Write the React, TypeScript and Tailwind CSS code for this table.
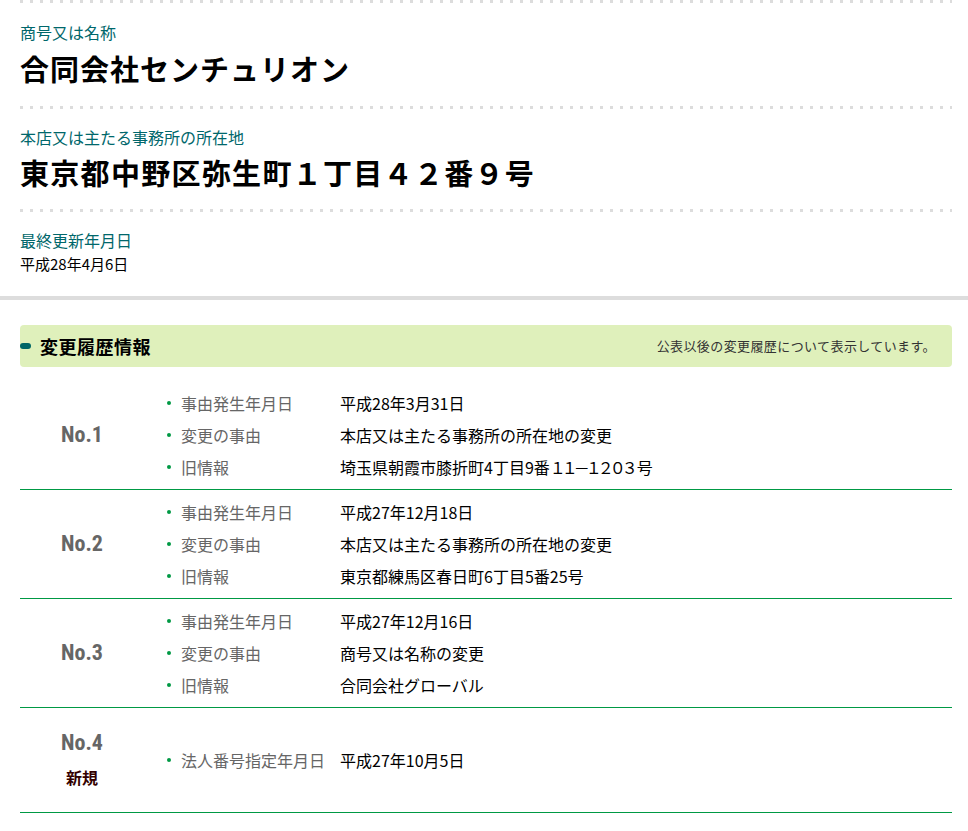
import React from "react";

type Item = { label: string; value: React.ReactNode };
type History = { no: string; isNew?: boolean; items: Item[] };

const histories: History[] = [
  {
    no: "No.1",
    items: [
      { label: "事由発生年月日", value: "平成28年3月31日" },
      { label: "変更の事由", value: "本店又は主たる事務所の所在地の変更" },
      {
        label: "旧情報",
        value: (
          <>
            埼玉県朝霞市膝折町4丁目9番<span className="tracking-[-4px]">１１－１２０３</span>
            <span className="ml-[3px]">号</span>
          </>
        ),
      },
    ],
  },
  {
    no: "No.2",
    items: [
      { label: "事由発生年月日", value: "平成27年12月18日" },
      { label: "変更の事由", value: "本店又は主たる事務所の所在地の変更" },
      { label: "旧情報", value: "東京都練馬区春日町6丁目5番25号" },
    ],
  },
  {
    no: "No.3",
    items: [
      { label: "事由発生年月日", value: "平成27年12月16日" },
      { label: "変更の事由", value: "商号又は名称の変更" },
      { label: "旧情報", value: "合同会社グローバル" },
    ],
  },
  {
    no: "No.4",
    isNew: true,
    items: [{ label: "法人番号指定年月日", value: "平成27年10月5日" }],
  },
];

const jp = { fontFamily: '"Noto Sans CJK JP", "Noto Sans", sans-serif' };

function Dots() {
  return (
    <div className="h-[3px] w-full bg-[linear-gradient(to_right,#dcdcdc_3px,transparent_3px)] bg-[length:10px_3px] bg-repeat-x" />
  );
}

function HistoryRow({ h }: { h: History }) {
  return (
    <div>
      <div className={`flex py-[6px] ${h.isNew ? "h-[104px] items-center" : ""}`}>
        <div className="flex w-[124px] flex-col items-center justify-center">
          <div
            className="text-[22px] leading-[32px] font-bold text-[#666]"
            style={{ fontFamily: '"Liberation Sans Narrow", "Arial Narrow", "Roboto Condensed", "Liberation Sans", sans-serif' }}
          >
            {h.no}
          </div>
          {h.isNew && (
            <div className="mt-[2px] text-[16px] leading-[32px] font-bold text-[#330000]">新規</div>
          )}
        </div>
        <ul className="flex flex-col">
          {h.items.map((it) => (
            <li key={it.label} className="flex h-[32px] items-center text-[16px]">
              <span className="ml-[23px] h-[4px] w-[4px] rounded-full bg-[#009944]" />
              <span className="ml-[10px] w-[159px] text-[#666]">{it.label}</span>
              <span className="text-black">{it.value}</span>
            </li>
          ))}
        </ul>
      </div>
      <div className="h-px w-full bg-[#009944]" />
    </div>
  );
}

export default function App() {
  return (
    <div className="min-h-[831px] w-[968px] bg-white pb-[18px]" style={jp}>
      <div className="pl-[20px] pr-[16px]">
        <Dots />
        <div className="pt-[17px] pb-[18px]">
          <p className="text-[16px] leading-[24px] text-[#00676b]">商号又は名称</p>
          <h1 className="mt-[4px] text-[29px] leading-[40px] font-bold tracking-[1px] text-black">
            合同会社センチュリオン
          </h1>
        </div>
        <Dots />
        <div className="pt-[16px] pb-[17px]">
          <p className="text-[16px] leading-[24px] text-[#00676b]">本店又は主たる事務所の所在地</p>
          <h2 className="mt-[3px] text-[29px] leading-[40px] font-bold tracking-[1.3px] text-black">
            東京都中野区弥生町１丁目４２番９号
          </h2>
        </div>
        <Dots />
        <div className="pt-[16px] pb-[20px]">
          <p className="text-[16px] leading-[24px] text-[#00676b]">最終更新年月日</p>
          <p className="text-[15px] leading-[24px] text-black">平成28年4月6日</p>
        </div>
      </div>

      <div className="h-[4px] w-full bg-[#dddddd]" />

      <div className="pl-[20px] pr-[16px] pt-[25px]">
        <div className="flex h-[42px] items-center justify-between rounded-[4px] bg-[#dff0bb] pr-[16px]">
          <div className="flex items-center">
            <span className="h-[6px] w-[11px] rounded-[3px] bg-[#006666]" />
            <h3 className="ml-[9px] text-[18px] font-bold tracking-[0.5px] text-black">変更履歴情報</h3>
          </div>
          <p className="text-[13px] tracking-[0.4px] text-[#333]">公表以後の変更履歴について表示しています。</p>
        </div>

        <div className="mt-[14px]">
          {histories.map((h) => (
            <HistoryRow key={h.no} h={h} />
          ))}
        </div>
      </div>
    </div>
  );
}
